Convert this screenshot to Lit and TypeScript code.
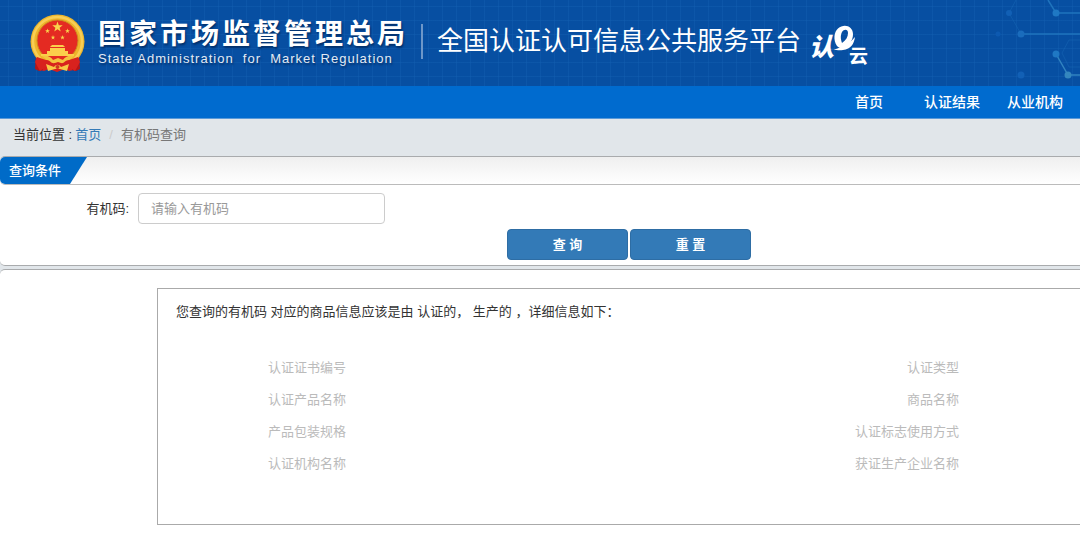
import { LitElement, html, css, svg } from "lit";
import { customElement } from "lit/decorators.js";

const rows = [
  ["认证证书编号", "认证类型"],
  ["认证产品名称", "商品名称"],
  ["产品包装规格", "认证标志使用方式"],
  ["认证机构名称", "获证生产企业名称"],
];

const star = (x: number, y: number, r: number) => {
  const points = Array.from({ length: 10 }, (_, i) => {
    const d = i % 2 ? r * 0.4 : r;
    const a = (Math.PI / 5) * i - Math.PI / 2;
    return `${(x + d * Math.cos(a)).toFixed(2)},${(y + d * Math.sin(a)).toFixed(2)}`;
  }).join(" ");
  return svg`<polygon points=${points} fill="#f9d44c"/>`;
};

@customElement("site-header")
class SiteHeader extends LitElement {
  static styles = css`
    :host { display: block; color: #fff; }
    .banner {
      display: flex;
      height: 86px;
      padding-left: 29px;
      overflow: hidden;
      background:
        linear-gradient(90deg, #1662b366 1px, transparent 1px) 8px 6px / 14px 14px,
        linear-gradient(180deg, #1662b366 1px, transparent 1px) 8px 6px / 14px 14px,
        #074fa2;
    }
    .emblem { flex: none; margin-top: 13px; }
    .agency {
      flex: none;
      margin: 17px 0 0 13px;
      text-shadow: 1px 2px 2px #03306b;
    }
    .agency-name {
      margin: 0;
      font-size: 28px;
      line-height: 35px;
      font-weight: 700;
      letter-spacing: 3px;
      white-space: nowrap;
    }
    .agency-en {
      margin: 0;
      font: 13px/14px "Liberation Sans", Arial, sans-serif;
      letter-spacing: 1px;
      white-space: pre;
      color: #e3ebf5;
    }
    .rule { flex: none; width: 2px; height: 35px; margin: 24px 14px 0 13px; background: #6d97c9; }
    .platform { flex: none; margin: 0; padding-top: 22px; font-size: 26px; line-height: 38px; font-weight: 400; }
    .cloud { flex: none; margin-top: 22px; }
    .network { flex: none; margin-left: auto; }
    nav {
      display: flex;
      justify-content: flex-end;
      gap: 27px;
      height: 33px;
      padding-right: 17px;
      background: #006bcf;
      border-bottom: 1px solid #5b9ad8;
      box-sizing: border-box;
    }
    nav a { color: #fff; text-decoration: none; font-size: 14px; line-height: 32px; font-weight: 500; }
    nav a:first-child { margin-right: 14px; }
  `;

  render() {
    return html`
      <header class="banner">
        <svg class="emblem" width="56" height="60" viewBox="0 0 56 60" role="img" aria-label="国徽">
          <path d="M9 41 L28 47 47 41 49 56 40 58 36 56 28 59 20 56 15 58 8 56Z" fill="#d81f1c"/>
          <path d="M7 42 14 47 14 57 10 58 6 56ZM50 42 43 47 43 57 47 58 51 56Z" fill="#b91416"/>
          <circle cx="28.500" cy="28.500" r="27" fill="#eeb52b"/>
          <circle cx="28.500" cy="28.500" r="24.500" fill="none" stroke="#f8ce55" stroke-width="2.500"/>
          <circle cx="28.500" cy="27.500" r="20.500" fill="#e42a22" stroke="#ce8b20"/>
          ${star(28.5, 14, 5.5)} ${star(18.5, 18, 2.6)} ${star(38.5, 18, 2.6)}
          ${star(24, 24.5, 2.4)} ${star(33.5, 24.5, 2.4)}
          <path d="M23 32h11l2 2H21ZM21 35h15v3H21ZM18 38h21v3h6v2H12v-2h6Z" fill="#fbce4b"/>
          <path d="M8 44l9 3h23l9-3 2 5-5 9-6-4H17l-6 4L6 49Z" fill="#d8221e"/>
          <path d="M13 43c6-1 9 1 11 4l5-2 5 2c2-3 5-5 11-4l-5 4c-4 0-5 4-8 3l-3-1-3 1c-4 1-5-3-8-3Z" fill="#f4c33f"/>
          <path d="M17 51l8 3c2-3 5-3 7 0l8-3-2 7-7-2h-5l-7 2Z" fill="#f8c846"/>
          <circle cx="28.500" cy="54" r="2" fill="#ce3720"/>
        </svg>
        <div class="agency">
          <p class="agency-name">国家市场监督管理总局</p>
          <p class="agency-en">State Administration  for  Market Regulation</p>
        </div>
        <div class="rule"></div>
        <h1 class="platform">全国认证认可信息公共服务平台</h1>
        <svg class="cloud" width="68" height="48" viewBox="0 0 68 48" role="img" aria-label="认e云" fill="#fff">
          <text x="8" y="34" font-size="25" font-weight="900" font-style="italic" font-family="Noto Sans CJK SC">认</text>
          <path fill-rule="evenodd" d="M36 24C32 18 33 10 37 6.500 43 1 52 4 52 12c0 6-3 10-8 14-3 1-6 0-8-2ZM41 21c4-3 6-6 6-10 0-4-4-4-6-1-2 4-1 8 0 11Z"/>
          <path d="M28 28c6 0 10-2 14-4 4-2 8-4 12-9-1 7-4 12-12 13-5 1-8-1-14 0Z"/>
          <text x="48" y="41" font-size="19" font-weight="700" font-family="Noto Sans CJK SC">云</text>
        </svg>
        <svg class="network" width="110" height="86" viewBox="0 0 110 86" fill="none" aria-hidden="true">
          <g stroke="#1767b5" opacity=".5">
            <path d="M39 13 46 0M39 13 51 34M110 40H99l-7 13 7 14h11"/>
          </g>
          <g stroke="#1f74bd" stroke-width="1.500">
            <path d="M78 0l8 13h24M51 34h59"/>
            <path d="M86 54l12 21h12" stroke="#3183c0"/>
          </g>
          <g fill="#1260b5">
            <circle cx="39" cy="13" r="3"/><circle cx="28" cy="34" r="2.500" fill="#0d59b0"/>
            <circle cx="51" cy="34" r="3.500" fill="#1a6cbc"/><circle cx="51" cy="75" r="3.500"/>
            <circle cx="86" cy="13" r="3.500" fill="#1f78c4"/><circle cx="86" cy="54" r="3.500" fill="#1f78c4"/>
            <circle cx="98" cy="75" r="3.500" fill="#3486be"/>
          </g>
        </svg>
      </header>
      <nav>
        <a href="#home">首页</a><a href="#results">认证结果</a><a href="#agencies">从业机构</a>
      </nav>
    `;
  }
}

@customElement("search-panel")
class SearchPanel extends LitElement {
  static styles = css`
    :host {
      display: block;
      background: #fff;
      border: 1px solid #a9abad;
      border-width: 1px 0;
      border-radius: 5px 0 0 5px;
    }
    .heading {
      display: flex;
      background: linear-gradient(#efefef, #fff);
      border-bottom: 1px solid #bbb;
      border-radius: 5px 0 0 5px;
    }
    h2 {
      margin: 0;
      width: 87px;
      padding-left: 9px;
      box-sizing: border-box;
      font-size: 13px;
      line-height: 27px;
      font-weight: 500;
      color: #fff;
      background: #006bc8;
      border-radius: 5px 0 0 5px;
      clip-path: polygon(0 0, 100% 0, 70px 100%, 0 100%);
    }
    form { margin: 0; padding: 8px 0 5px; }
    .field { display: flex; align-items: center; }
    label { width: 129px; margin-right: 9px; text-align: right; }
    input {
      width: 247px;
      height: 31px;
      box-sizing: border-box;
      padding: 0 12px;
      font: inherit;
      border: 1px solid #ccc;
      border-radius: 4px;
      outline: none;
    }
    input::placeholder { color: #999; }
    .actions { display: flex; gap: 2px; margin-top: 5px; padding-left: 507px; }
    button {
      width: 121px;
      height: 31px;
      padding: 0;
      font: inherit;
      font-weight: 700;
      color: #fff;
      background: #337ab7;
      border: 1px solid #2e6da4;
      border-radius: 4px;
    }
  `;

  render() {
    return html`
      <div class="heading"><h2>查询条件</h2></div>
      <form @submit=${(e: Event) => e.preventDefault()}>
        <div class="field">
          <label for="code">有机码:</label>
          <input id="code" type="text" placeholder="请输入有机码" />
        </div>
        <div class="actions">
          <button type="submit">查 询</button>
          <button type="reset">重 置</button>
        </div>
      </form>
    `;
  }
}

@customElement("result-panel")
class ResultPanel extends LitElement {
  static styles = css`
    :host {
      display: block;
      padding: 18px 0 16px 157px;
      background: #fff;
      border-top: 1px solid #a9abad;
      border-radius: 5px 0 0 0;
    }
    .box { padding: 13px 0 44px; border: 1px solid #aaa; border-right: 0; }
    p { margin: 0; padding-left: 18px; line-height: 20px; }
    table { width: 100%; margin-top: 30px; border-collapse: collapse; table-layout: fixed; }
    th { height: 32px; padding: 0; font-weight: 400; text-align: right; color: #bbb; }
    .first { width: 188px; }
    .second { width: 110px; }
    .last { width: 121px; }
  `;

  render() {
    return html`
      <div class="box">
        <p>您查询的有机码 对应的商品信息应该是由 认证的， 生产的 ，详细信息如下：</p>
        <table>
          <colgroup><col class="first" /><col /><col class="second" /><col class="last" /></colgroup>
          <tbody>
            ${rows.map(([a, b]) => html`<tr><th scope="row">${a}</th><td></td><th scope="row">${b}</th><td></td></tr>`)}
          </tbody>
        </table>
      </div>
    `;
  }
}

@customElement("app-root")
class AppRoot extends LitElement {
  static styles = css`
    :host {
      display: block;
      min-height: 100vh;
      background: #fff;
      color: #333;
      font: 13px/20px "Liberation Sans", "Noto Sans CJK SC", sans-serif;
      overflow: hidden;
    }
    .crumbs { display: flex; padding: 6px 13px 11px; color: #777; }
    .crumbs .where { color: #333; padding-right: 3px; }
    .crumbs a { color: #337ab7; text-decoration: none; }
    .slash { padding: 0 8px; color: #ccc; }
    main { display: grid; gap: 3px; }
    .body { background: #e1e6ea; }
  `;

  render() {
    return html`
      <site-header></site-header>
      <div class="body">
        <div class="crumbs"><span class="where">当前位置 :</span><a href="#home">首页</a><span class="slash">/</span><span>有机码查询</span></div>
        <main>
          <search-panel></search-panel>
          <result-panel></result-panel>
        </main>
      </div>
    `;
  }
}
